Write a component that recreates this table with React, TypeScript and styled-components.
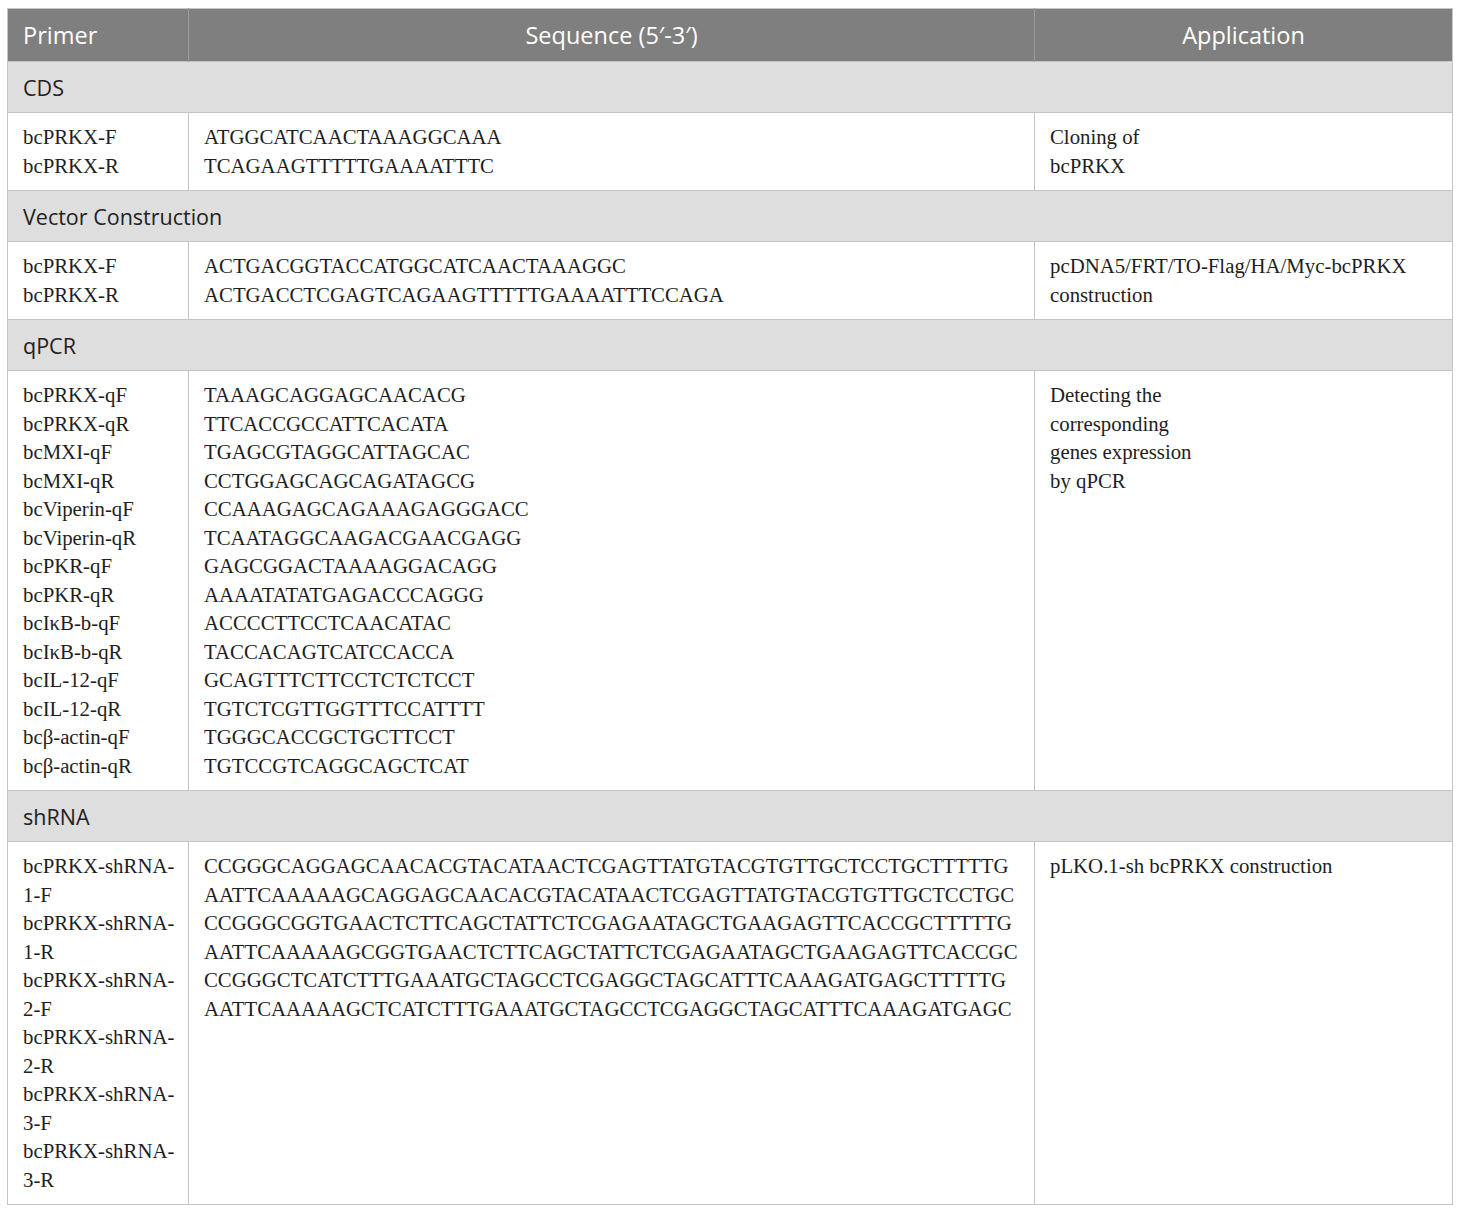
import React from 'react';
import styled, { createGlobalStyle } from 'styled-components';

const GlobalStyle = createGlobalStyle`
    html, body {
      margin: 0;
      padding: 0;
      background: #ffffff;
    }
    body {
      padding: 8px 7px;
    }
  `,
  Table = styled.table`
    width: 1445px;
    table-layout: fixed;
    border-collapse: collapse;
    border: 1px solid #c4c4c4;
  `,
  Col = styled.col<{ $width: number }>`
    width: ${(props) => props.$width}px;
  `,
  HeadCell = styled.th<{ $align?: string }>`
    height: 52px;
    padding: 0 15px;
    background-color: #7f7f7f;
    color: #ffffff;
    font-family: 'Open Sans', 'Noto Sans', sans-serif;
    font-weight: 400;
    font-size: 23.5px;
    text-align: ${(props) => props.$align || 'left'};
    vertical-align: middle;
    border-left: 1px solid #9a9a9a;
    &:first-child {
      border-left: none;
    }
  `,
  SectionCell = styled.td`
    height: 50px;
    padding: 0 15px;
    background-color: #dedede;
    color: #222222;
    font-family: 'Open Sans', 'Noto Sans', sans-serif;
    font-size: 21.5px;
    vertical-align: middle;
    border-top: 1px solid #c4c4c4;
    border-bottom: 1px solid #c4c4c4;
  `,
  Cell = styled.td<{ $nowrap?: boolean }>`
    padding: 10px 8px 10px 15px;
    vertical-align: top;
    color: #1e1e1e;
    font-family: 'Liberation Serif', 'Times New Roman', serif;
    font-size: 20.8px;
    line-height: 28.5px;
    border-left: 1px solid #c4c4c4;
    white-space: ${(props) => (props.$nowrap ? 'nowrap' : 'normal')};
    &:first-child {
      border-left: none;
    }
  `,
  Line = styled.div``;

interface Group {
  title: string;
  primers: string[];
  sequences: string[];
  application: string[];
}

const groups: Group[] = [
  {
    title: 'CDS',
    primers: ['bcPRKX-F', 'bcPRKX-R'],
    sequences: ['ATGGCATCAACTAAAGGCAAA', 'TCAGAAGTTTTTGAAAATTTC'],
    application: ['Cloning of', 'bcPRKX'],
  },
  {
    title: 'Vector Construction',
    primers: ['bcPRKX-F', 'bcPRKX-R'],
    sequences: [
      'ACTGACGGTACCATGGCATCAACTAAAGGC',
      'ACTGACCTCGAGTCAGAAGTTTTTGAAAATTTCCAGA',
    ],
    application: ['pcDNA5/FRT/TO-Flag/HA/Myc-bcPRKX', 'construction'],
  },
  {
    title: 'qPCR',
    primers: [
      'bcPRKX-qF',
      'bcPRKX-qR',
      'bcMXI-qF',
      'bcMXI-qR',
      'bcViperin-qF',
      'bcViperin-qR',
      'bcPKR-qF',
      'bcPKR-qR',
      'bcIκB-b-qF',
      'bcIκB-b-qR',
      'bcIL-12-qF',
      'bcIL-12-qR',
      'bcβ-actin-qF',
      'bcβ-actin-qR',
    ],
    sequences: [
      'TAAAGCAGGAGCAACACG',
      'TTCACCGCCATTCACATA',
      'TGAGCGTAGGCATTAGCAC',
      'CCTGGAGCAGCAGATAGCG',
      'CCAAAGAGCAGAAAGAGGGACC',
      'TCAATAGGCAAGACGAACGAGG',
      'GAGCGGACTAAAAGGACAGG',
      'AAAATATATGAGACCCAGGG',
      'ACCCCTTCCTCAACATAC',
      'TACCACAGTCATCCACCA',
      'GCAGTTTCTTCCTCTCTCCT',
      'TGTCTCGTTGGTTTCCATTTT',
      'TGGGCACCGCTGCTTCCT',
      'TGTCCGTCAGGCAGCTCAT',
    ],
    application: ['Detecting the', 'corresponding', 'genes expression', 'by qPCR'],
  },
  {
    title: 'shRNA',
    primers: [
      'bcPRKX-shRNA-1-F',
      'bcPRKX-shRNA-1-R',
      'bcPRKX-shRNA-2-F',
      'bcPRKX-shRNA-2-R',
      'bcPRKX-shRNA-3-F',
      'bcPRKX-shRNA-3-R',
    ],
    sequences: [
      'CCGGGCAGGAGCAACACGTACATAACTCGAGTTATGTACGTGTTGCTCCTGCTTTTTG',
      'AATTCAAAAAGCAGGAGCAACACGTACATAACTCGAGTTATGTACGTGTTGCTCCTGC',
      'CCGGGCGGTGAACTCTTCAGCTATTCTCGAGAATAGCTGAAGAGTTCACCGCTTTTTG',
      'AATTCAAAAAGCGGTGAACTCTTCAGCTATTCTCGAGAATAGCTGAAGAGTTCACCGC',
      'CCGGGCTCATCTTTGAAATGCTAGCCTCGAGGCTAGCATTTCAAAGATGAGCTTTTTG',
      'AATTCAAAAAGCTCATCTTTGAAATGCTAGCCTCGAGGCTAGCATTTCAAAGATGAGC',
    ],
    application: ['pLKO.1-sh bcPRKX construction'],
  },
];

/*
    Primer table
*/
export default function App(): JSX.Element {
  return (
    <>
      <GlobalStyle />
      <Table>
        <colgroup>
          <Col $width={181} />
          <Col $width={846} />
          <Col $width={418} />
        </colgroup>
        <thead>
          <tr>
            <HeadCell>Primer</HeadCell>
            <HeadCell $align="center">Sequence (5′-3′)</HeadCell>
            <HeadCell $align="center">Application</HeadCell>
          </tr>
        </thead>
        <tbody>
          {groups.map((group) => (
            <React.Fragment key={group.title}>
              <tr>
                <SectionCell colSpan={3}>{group.title}</SectionCell>
              </tr>
              <tr>
                <Cell>
                  {group.primers.map((p, i) => (
                    <Line key={i}>{p}</Line>
                  ))}
                </Cell>
                <Cell $nowrap>
                  {group.sequences.map((s, i) => (
                    <Line key={i}>{s}</Line>
                  ))}
                </Cell>
                <Cell $nowrap>
                  {group.application.map((a, i) => (
                    <Line key={i}>{a}</Line>
                  ))}
                </Cell>
              </tr>
            </React.Fragment>
          ))}
        </tbody>
      </Table>
    </>
  );
}
